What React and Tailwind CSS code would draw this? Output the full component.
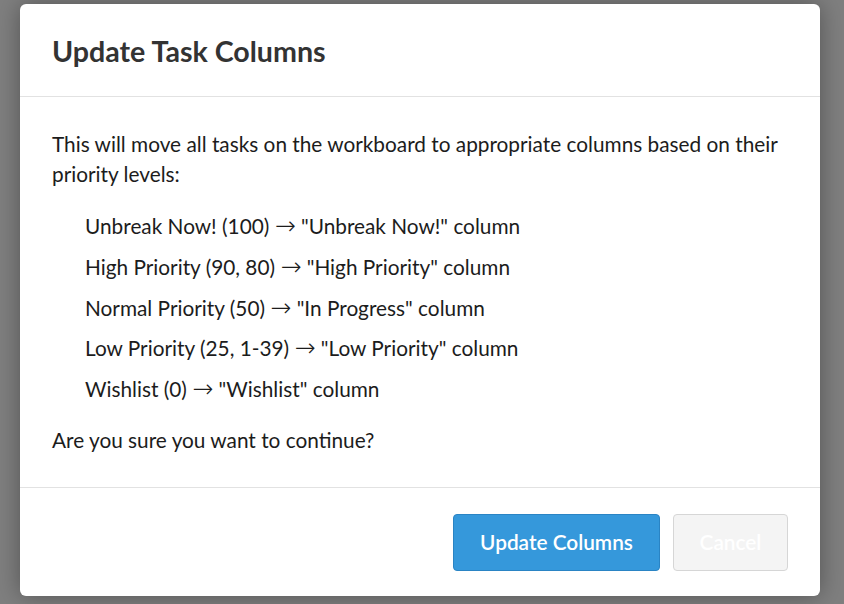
import React from 'react';

const rules = [
  ['Unbreak Now! (100)', '"Unbreak Now!" column'],
  ['High Priority (90, 80)', '"High Priority" column'],
  ['Normal Priority (50)', '"In Progress" column'],
  ['Low Priority (25, 1-39)', '"Low Priority" column'],
  ['Wishlist (0)', '"Wishlist" column'],
];

const App = () => {
  return (
    <div
      className="w-full h-screen bg-[#7f7f7f] flex pl-[20px] pt-[4px] overflow-hidden"
      style={{ fontFamily: 'Lato, "Open Sans", sans-serif' }}
    >
      <div className="w-[800px] h-[592px] bg-white rounded-[6px] shadow-[0_0_24px_rgba(0,0,0,0.35)] flex flex-col">
        <header className="h-[93px] shrink-0 border-b border-[#e2e2e2] px-[32px] flex items-center">
          <h2 className="text-[28.6px] font-bold text-[#333] leading-none pt-[2px]">Update Task Columns</h2>
        </header>

        <div className="flex-1 px-[32px] pt-[32px] text-[20.8px] text-[#1c1c1c] leading-[30px]">
          <p>
            This will move all tasks on the workboard to appropriate columns based on their priority levels:
          </p>
          <ul className="pl-[33px] mt-[22px] flex flex-col gap-[10.75px]">
            {rules.map(([from, to]) => (
              <li key={from} className="h-[30px] leading-[30px] overflow-visible">
                {from}{' '}
                <span className="font-['DejaVu_Sans',sans-serif] font-extralight text-[25px] leading-none">→</span>{' '}
                {to}
              </li>
            ))}
          </ul>
          <p className="mt-[21px]">Are you sure you want to continue?</p>
        </div>

        <footer className="h-[109px] shrink-0 border-t border-[#e2e2e2] px-[32px] flex items-center justify-end gap-[13px]">
          <button className="h-[57px] w-[207px] rounded-[4px] bg-[#3598db] border border-[#2a84c4] text-white text-[20.8px] font-semibold">
            Update Columns
          </button>
          <button className="h-[57px] w-[115px] rounded-[4px] bg-[#f4f4f4] border border-[#d6d6d6] text-white text-[20.8px] font-semibold">
            Cancel
          </button>
        </footer>
      </div>
    </div>
  );
};

export default App;
